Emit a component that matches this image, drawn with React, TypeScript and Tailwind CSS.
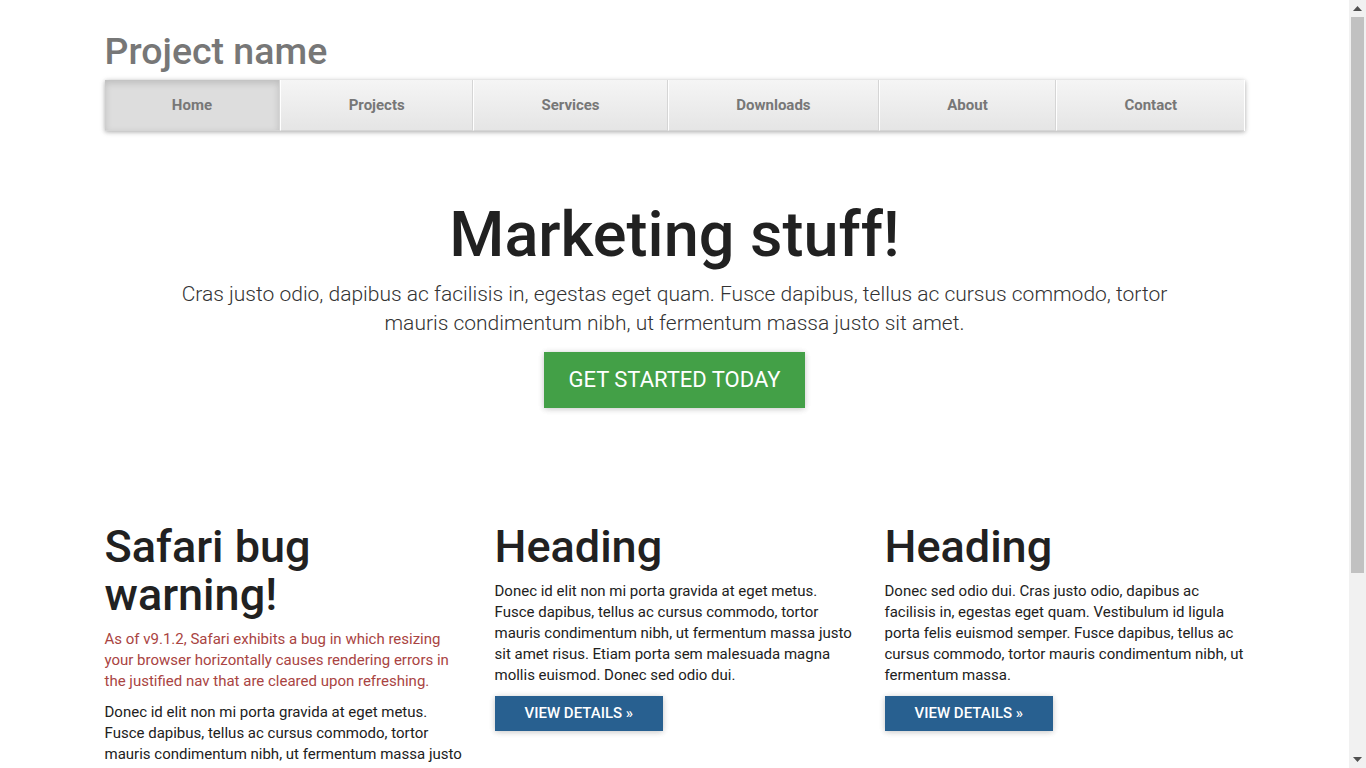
const navItems = ["Home", "Projects", "Services", "Downloads", "About", "Contact"];

const columns = [
  {
    title: "Safari bug warning!",
    warning:
      "As of v9.1.2, Safari exhibits a bug in which resizing your browser horizontally causes rendering errors in the justified nav that are cleared upon refreshing.",
    body: "Donec id elit non mi porta gravida at eget metus. Fusce dapibus, tellus ac cursus commodo, tortor mauris condimentum nibh, ut fermentum massa justo sit amet risus. Etiam porta sem malesuada magna mollis euismod. Donec sed odio dui.",
  },
  {
    title: "Heading",
    body: "Donec id elit non mi porta gravida at eget metus. Fusce dapibus, tellus ac cursus commodo, tortor mauris condimentum nibh, ut fermentum massa justo sit amet risus. Etiam porta sem malesuada magna mollis euismod. Donec sed odio dui.",
  },
  {
    title: "Heading",
    body: "Donec sed odio dui. Cras justo odio, dapibus ac facilisis in, egestas eget quam. Vestibulum id ligula porta felis euismod semper. Fusce dapibus, tellus ac cursus commodo, tortor mauris condimentum nibh, ut fermentum massa.",
  },
];

const Scrollbar = () => (
  <div className="flex w-[17px] shrink-0 flex-col items-center bg-[#f1f1f1]">
    <div className="flex h-[17px] w-full items-center justify-center">
      <svg width="9" height="5" viewBox="0 0 9 5">
        <path d="M0 5 L4.5 0 L9 5 Z" fill="#505050" />
      </svg>
    </div>
    <div className="h-[556px] w-[13px] bg-[#c1c1c1]" />
    <div className="flex-1" />
    <div className="flex h-[17px] w-full items-center justify-center">
      <svg width="9" height="5" viewBox="0 0 9 5">
        <path d="M0 0 L9 0 L4.5 5 Z" fill="#505050" />
      </svg>
    </div>
  </div>
);

const App = () => {
  return (
    <div className="flex h-screen overflow-hidden bg-white font-['Roboto','Liberation_Sans',sans-serif] text-[15px] leading-[21px] text-[#212121]">
      <div className="min-w-0 flex-1">
        <div className="mx-auto w-[1170px] px-[15px]">
          {/* masthead */}
          <div>
            <h3 className="pt-[31px] pb-[9px] text-[37.5px] font-medium leading-[40px] text-[#777]">Project name</h3>
            <nav className="flex shadow-[0_1px_6px_rgba(0,0,0,0.16),0_1px_4px_rgba(0,0,0,0.2)]">
              {navItems.map((item, i) => (
                <a
                  key={item}
                  href="#"
                  className={
                    i === 0
                      ? "flex-auto border-r border-r-[#d5d5d5] border-b border-b-[#d5d5d5] bg-[#ddd] py-[15px] text-center font-bold leading-[20px] text-[#777] shadow-[inset_0_3px_7px_rgba(0,0,0,0.15)]"
                      : "flex-auto border-l border-l-white border-r border-r-[#d5d5d5] border-b border-b-[#d5d5d5] bg-gradient-to-b from-[#f5f5f5] to-[#e5e5e5] py-[15px] text-center font-bold leading-[20px] text-[#777] last:border-r-0"
                  }
                >
                  {item}
                </a>
              ))}
            </nav>
          </div>

          {/* jumbotron */}
          <div className="pt-[69px] pb-[115px] text-center">
            <h1 className="text-[63px] font-medium leading-[70px] text-[#212121]">Marketing stuff!</h1>
            <p className="mx-auto mt-[10px] w-[1000px] text-[21px] font-light leading-[29px] text-[#333]">
              Cras justo odio, dapibus ac facilisis in, egestas eget quam. Fusce dapibus, tellus ac cursus commodo, tortor mauris condimentum nibh, ut fermentum massa justo sit amet.
            </p>
            <div className="mt-[14px] flex justify-center">
              <a
                href="#"
                className="block bg-[#43a047] px-[24px] py-[13px] text-[22px] uppercase leading-[30px] text-white shadow-[0_1px_6px_rgba(0,0,0,0.12),0_1px_6px_rgba(0,0,0,0.12)]"
              >
                Get started today
              </a>
            </div>
          </div>

          {/* columns */}
          <div className="-mx-[15px] flex">
            {columns.map((col, i) => (
              <div key={i} className="w-1/3 px-[15px]">
                <h2 className="text-[45px] font-medium leading-[48px] text-[#212121]">{col.title}</h2>
                {col.warning && <p className="mt-[10px] text-[#a94442]">{col.warning}</p>}
                <p className="mt-[10px]">{col.body}</p>
                <div className="mt-[10px] flex">
                  <a
                    href="#"
                    className="block bg-[#286090] px-[30px] py-[7px] font-medium uppercase leading-[21px] text-white shadow-[0_1px_6px_rgba(0,0,0,0.12),0_1px_6px_rgba(0,0,0,0.12)]"
                  >
                    View details »
                  </a>
                </div>
              </div>
            ))}
          </div>

          <footer className="mt-[40px] border-t border-[#e5e5e5] pt-[19px] pb-[40px]">
            <p>© Company 2014</p>
          </footer>
        </div>
      </div>
      <Scrollbar />
    </div>
  );
};

export default App;
